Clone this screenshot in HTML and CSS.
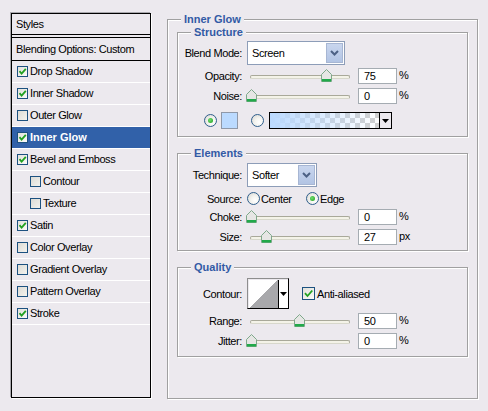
FILE: index.html
```html
<!DOCTYPE html>
<html>
<head>
<meta charset="utf-8">
<link rel="stylesheet" href="styles.css">
</head>
<body>
<div class="dialog">
  <div class="styles-list">
    <div class="list-head">Styles</div>
    <div class="list-gap"></div>
    <div class="list-blend">Blending Options: Custom</div>
    <div class="item"><span class="cb"><svg viewBox="0 0 9 9"><path d="M1.5 4.2 L3.6 6.6 L7.8 1.8" /></svg></span>Drop Shadow</div>
    <div class="item"><span class="cb"><svg viewBox="0 0 9 9"><path d="M1.5 4.2 L3.6 6.6 L7.8 1.8" /></svg></span>Inner Shadow</div>
    <div class="item"><span class="cb off"></span>Outer Glow</div>
    <div class="item selected"><span class="cb"><svg viewBox="0 0 9 9"><path d="M1.5 4.2 L3.6 6.6 L7.8 1.8" /></svg></span>Inner Glow</div>
    <div class="item"><span class="cb"><svg viewBox="0 0 9 9"><path d="M1.5 4.2 L3.6 6.6 L7.8 1.8" /></svg></span>Bevel and Emboss</div>
    <div class="item sub"><span class="cb off"></span>Contour</div>
    <div class="item sub"><span class="cb off"></span>Texture</div>
    <div class="item"><span class="cb"><svg viewBox="0 0 9 9"><path d="M1.5 4.2 L3.6 6.6 L7.8 1.8" /></svg></span>Satin</div>
    <div class="item"><span class="cb off"></span>Color Overlay</div>
    <div class="item"><span class="cb off"></span>Gradient Overlay</div>
    <div class="item"><span class="cb off"></span>Pattern Overlay</div>
    <div class="item"><span class="cb"><svg viewBox="0 0 9 9"><path d="M1.5 4.2 L3.6 6.6 L7.8 1.8" /></svg></span>Stroke</div>
  </div>

  <div class="panel">
    <div class="title">Inner Glow</div>

    <div class="group structure">
      <div class="title">Structure</div>
      <div class="row blend">
        <span class="label">Blend Mode:</span>
        <div class="select wide"><span class="sel-text">Screen</span><span class="sel-btn"><svg viewBox="0 0 9 6"><path d="M1 1 L4.5 4.5 L8 1" /></svg></span></div>
      </div>
      <div class="row slider-row r-opacity">
        <span class="label">Opacity:</span>
        <div class="slider"><div class="track"></div><svg class="thumb" style="left:71px" viewBox="0 0 11 13"><path class="th-body" d="M5.5 0.5 L10.5 5.5 L10.5 12.5 L0.5 12.5 L0.5 5.5 Z"/><rect class="th-green" x="1" y="10" width="9" height="2.5"/></svg></div>
        <span class="num">75</span><span class="unit">%</span>
      </div>
      <div class="row slider-row r-noise">
        <span class="label">Noise:</span>
        <div class="slider"><div class="track"></div><svg class="thumb" style="left:-4px" viewBox="0 0 11 13"><path class="th-body" d="M5.5 0.5 L10.5 5.5 L10.5 12.5 L0.5 12.5 L0.5 5.5 Z"/><rect class="th-green" x="1" y="10" width="9" height="2.5"/></svg></div>
        <span class="num">0</span><span class="unit">%</span>
      </div>
      <div class="row color-row">
        <span class="radio on"></span>
        <span class="swatch"></span>
        <span class="radio second"></span>
        <div class="gradient"><span class="grad-fill"></span><span class="grad-btn"><svg viewBox="0 0 7 4"><path d="M0 0 L7 0 L3.5 4 Z"/></svg></span></div>
      </div>
    </div>

    <div class="group elements">
      <div class="title">Elements</div>
      <div class="row technique">
        <span class="label">Technique:</span>
        <div class="select narrow"><span class="sel-text">Softer</span><span class="sel-btn"><svg viewBox="0 0 9 6"><path d="M1 1 L4.5 4.5 L8 1" /></svg></span></div>
      </div>
      <div class="row source">
        <span class="label">Source:</span>
        <span class="opt first"><span class="radio"></span>Center</span>
        <span class="opt"><span class="radio on"></span>Edge</span>
      </div>
      <div class="row slider-row r-choke">
        <span class="label">Choke:</span>
        <div class="slider"><div class="track"></div><svg class="thumb" style="left:-4px" viewBox="0 0 11 13"><path class="th-body" d="M5.5 0.5 L10.5 5.5 L10.5 12.5 L0.5 12.5 L0.5 5.5 Z"/><rect class="th-green" x="1" y="10" width="9" height="2.5"/></svg></div>
        <span class="num">0</span><span class="unit">%</span>
      </div>
      <div class="row slider-row r-size">
        <span class="label">Size:</span>
        <div class="slider"><div class="track"></div><svg class="thumb" style="left:11px" viewBox="0 0 11 13"><path class="th-body" d="M5.5 0.5 L10.5 5.5 L10.5 12.5 L0.5 12.5 L0.5 5.5 Z"/><rect class="th-green" x="1" y="10" width="9" height="2.5"/></svg></div>
        <span class="num">27</span><span class="unit">px</span>
      </div>
    </div>

    <div class="group quality">
      <div class="title">Quality</div>
      <div class="row contour-row">
        <span class="label">Contour:</span>
        <div class="contour"><span class="curve"></span><span class="contour-btn"><svg viewBox="0 0 7 4"><path d="M0 0 L7 0 L3.5 4 Z"/></svg></span></div>
        <span class="cb big"><svg viewBox="0 0 11 11"><path d="M2 5.2 L4.5 8 L9.3 2.5" /></svg></span>
        <span class="aa">Anti-aliased</span>
      </div>
      <div class="row slider-row r-range">
        <span class="label">Range:</span>
        <div class="slider"><div class="track"></div><svg class="thumb" style="left:44px" viewBox="0 0 11 13"><path class="th-body" d="M5.5 0.5 L10.5 5.5 L10.5 12.5 L0.5 12.5 L0.5 5.5 Z"/><rect class="th-green" x="1" y="10" width="9" height="2.5"/></svg></div>
        <span class="num">50</span><span class="unit">%</span>
      </div>
      <div class="row slider-row r-jitter">
        <span class="label">Jitter:</span>
        <div class="slider"><div class="track"></div><svg class="thumb" style="left:-4px" viewBox="0 0 11 13"><path class="th-body" d="M5.5 0.5 L10.5 5.5 L10.5 12.5 L0.5 12.5 L0.5 5.5 Z"/><rect class="th-green" x="1" y="10" width="9" height="2.5"/></svg></div>
        <span class="num">0</span><span class="unit">%</span>
      </div>
    </div>
  </div>
</div>
</body>
</html>
```

FILE: styles.css
```css
* { box-sizing: border-box; }
html, body { margin: 0; padding: 0; }
body {
  background: #ece9ee;
  font-family: "Liberation Sans", Arial, sans-serif;
  font-size: 11px;
  letter-spacing: -0.4px;
  color: #000;
  width: 488px;
  height: 411px;
  overflow: hidden;
}
.dialog {
  display: flex;
  align-items: flex-start;
  padding: 13px 0 0 11px;
}

/* ---------- styles list ---------- */
.styles-list {
  width: 140px;
  height: 385px;
  border: 1px solid #000;
  box-shadow: 1px 1px 0 #fff, -1px -1px 0 #a9a8ad;
  display: flex;
  flex-direction: column;
}
.list-head {
  height: 21px;
  line-height: 20px;
  padding-left: 4px;
  border-bottom: 1px solid #000;
}
.list-gap { height: 2px; }
.list-blend {
  height: 24px;
  line-height: 22px;
  padding-left: 4px;
  border-top: 1px solid #000;
  border-bottom: 1px solid #000;
}
.item {
  height: 22px;
  border-bottom: 1px solid #fff;
  display: flex;
  align-items: center;
  padding-left: 5px;
  padding-bottom: 1px;
}
.item.sub { padding-left: 18px; }
.item.selected {
  background: #3161a9;
  color: #fff;
  font-weight: bold;
  letter-spacing: 0;
}
.cb {
  width: 11px;
  height: 11px;
  border: 1px solid #1c5180;
  background: linear-gradient(135deg, #e0e0da, #fbfbf9);
  margin-right: 2px;
  display: inline-flex;
  flex: none;
}
.cb.off { background: linear-gradient(135deg, #dcdbd5, #f3f2ee); }
.cb svg { width: 9px; height: 9px; }
.cb path { fill: none; stroke: #21a121; stroke-width: 1.8; }
.cb.big {
  width: 13px;
  height: 13px;
  margin-left: 13px;
  margin-right: 2px;
}
.cb.big svg { width: 11px; height: 11px; }

/* ---------- panel ---------- */
.panel {
  margin: 6px 0 0 16px;
  width: 311px;
  height: 380px;
  border: 1px solid #a0a0a0;
  box-shadow: inset 1px 1px 0 #fff, 1px 1px 0 #fff;
  padding-left: 9px;
}
.title {
  width: max-content;
  margin: -7px 0 0 4px;
  padding: 0 3px;
  line-height: 13px;
  height: 13px;
  background: #ece9ee;
  color: #325aa5;
  font-weight: bold;
  letter-spacing: 0;
}
.group {
  width: 291px;
  border: 1px solid #a0a0a0;
  box-shadow: inset 1px 1px 0 #fff, 1px 1px 0 #fff;
}
.group .title { margin-left: 13px; }
.structure { margin-top: 6px; height: 105px; }
.elements { margin-top: 16px; height: 98px; }
.quality { margin-top: 16px; height: 90px; }

.row {
  display: flex;
  align-items: center;
}
.label {
  width: 64px;
  margin-right: 5px;
  text-align: right;
  flex: none;
}

/* select */
.blend { margin-top: 2px; height: 24px; }
.technique { margin-top: 3px; height: 24px; }
.select {
  height: 24px;
  border: 1px solid #8d9db8;
  background: #fff;
  display: flex;
  align-items: center;
  padding: 1px;
}
.select.wide { width: 98px; }
.select.narrow { width: 70px; }
.sel-text { flex: 1; padding-left: 3px; }
.sel-btn {
  width: 17px;
  height: 20px;
  border: 1px solid #a7b6d3;
  background: linear-gradient(#c9d6ee, #b2c4e4);
  display: flex;
  align-items: center;
  justify-content: center;
}
.sel-btn svg { width: 9px; height: 6px; }
.sel-btn path { fill: none; stroke: #4d6185; stroke-width: 2; }

/* sliders */
.slider-row { height: 16px; }
.r-opacity { margin-top: 3px; }
.r-noise { margin-top: 4px; }
.r-choke { margin-top: 4px; }
.r-size { margin-top: 4px; }
.r-range { margin-top: 4px; }
.r-jitter { margin-top: 4px; }
.slider {
  position: relative;
  width: 100px;
  height: 16px;
  margin: 0 8px 0 3px;
  flex: none;
}
.track {
  position: absolute;
  left: 0;
  right: 0;
  top: 7px;
  height: 4px;
  border: 1px solid #a9a99a;
  border-bottom-color: #d8d8cc;
  border-radius: 2px;
  background: #f4f3e8;
}
.thumb {
  position: absolute;
  top: 1px;
  width: 11px;
  height: 13px;
}
.th-body { fill: #e6e6e4; stroke: #7ea88a; stroke-width: 1; }
.th-green { fill: #21a94a; }
.num {
  width: 39px;
  height: 16px;
  border: 1px solid #a5acb2;
  background: #fff;
  padding-left: 5px;
  line-height: 14px;
  flex: none;
}
.unit { margin-left: 2px; margin-top: -2px; }

/* color row */
.color-row { margin-top: 8px; height: 17px; }
.radio {
  width: 13px;
  height: 13px;
  border-radius: 50%;
  border: 1px solid #2f5e8c;
  background: radial-gradient(circle at 65% 65%, #fff 0, #f4f4f0 40%, #d6d5cf 100%);
  display: inline-flex;
  align-items: center;
  justify-content: center;
  flex: none;
}
.radio.on::after {
  content: "";
  width: 5px;
  height: 5px;
  border-radius: 50%;
  background: radial-gradient(circle at 40% 40%, #6fe06f, #1e9a1e);
}
.color-row .radio { margin-left: 26px; }
.swatch {
  width: 17px;
  height: 17px;
  margin-left: 4px;
  border: 1px solid #8f98a8;
  background: #bbdaff;
}
.color-row .radio.second { margin-left: 13px; }
.gradient {
  width: 123px;
  height: 17px;
  margin-left: 5px;
  border: 1px solid #000;
  display: flex;
}
.grad-fill {
  flex: 1;
  background:
    linear-gradient(to right, #bbdaff 0%, rgba(187, 218, 255, 0.55) 45%, rgba(187, 218, 255, 0) 100%),
    conic-gradient(#cfcfcf 25%, #fff 0 50%, #cfcfcf 0 75%, #fff 0) 0 0 / 10px 10px;
}
.grad-btn {
  width: 12px;
  border-left: 1px solid #000;
  background: #ece9ee;
  display: flex;
  align-items: center;
  justify-content: center;
}
.grad-btn svg, .contour-btn svg { width: 7px; height: 4px; }
.grad-btn path, .contour-btn path { fill: #000; }

/* source */
.source { margin-top: 5px; height: 13px; }
.opt { display: inline-flex; align-items: center; }
.opt .radio { margin-right: 1px; }
.opt.first { width: 59px; }

/* contour */
.contour-row { margin-top: 4px; height: 31px; }
.contour {
  width: 42px;
  height: 31px;
  border: 1px solid #000;
  border-top-color: #8e8e8e;
  border-left-color: #8e8e8e;
  display: flex;
  padding: 1px 0 0 1px;
}
.curve {
  width: 29px;
  height: 28px;
  background: linear-gradient(to bottom right, #fff 50%, #a8a8ab 50%);
}
.contour-btn {
  flex: 1;
  border-left: 1px solid #000;
  display: flex;
  align-items: center;
  justify-content: center;
  background: #fff;
}
```
